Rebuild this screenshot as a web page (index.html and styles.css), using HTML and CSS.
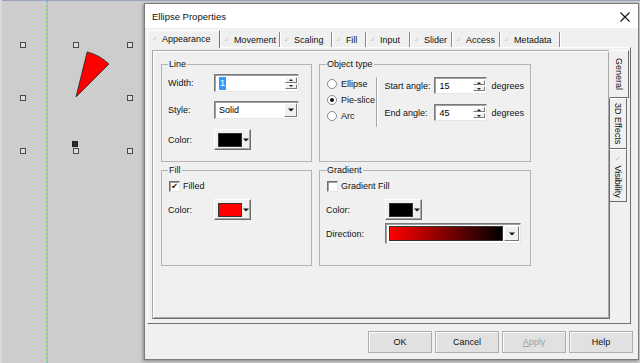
FILE: index.html
```html
<!DOCTYPE html>
<html lang="en">
<head>
  <meta charset="UTF-8" />
  <meta name="viewport" content="width=device-width, initial-scale=1.0" />
  <title>Ellipse Properties</title>
  <link rel="stylesheet" href="styles.css">
</head>
<body>
  <div class="desktop">
    <div class="topline"></div>
    <div class="guide"></div>

    <!-- selected pie-slice on the drawing canvas -->
    <svg class="shape" width="140" height="170" viewBox="0 0 140 170">
      <path d="M76 97 L87.2 51.9 A46.5 46.5 0 0 1 108.9 64.1 Z" fill="#ff0000" stroke="#222" stroke-width="0.8" />
    </svg>
    <div class="handle" style="left:20px;top:42px"></div>
    <div class="handle" style="left:73px;top:42px"></div>
    <div class="handle" style="left:127px;top:42px"></div>
    <div class="handle" style="left:20px;top:95px"></div>
    <div class="handle" style="left:127px;top:95px"></div>
    <div class="handle" style="left:20px;top:148px"></div>
    <div class="handle" style="left:73px;top:148px"></div>
    <div class="handle" style="left:127px;top:148px"></div>
    <div class="handle dark" style="left:72px;top:141px"></div>

    <div class="dialog">
      <div class="titlebar">
        <span class="title">Ellipse Properties</span>
        <svg class="close" width="10" height="10" viewBox="0 0 10 10">
          <path d="M0.5 0.5 L9.5 9.5 M9.5 0.5 L0.5 9.5" stroke="#111" stroke-width="1.1" />
        </svg>
      </div>

      <div class="client">
        <div class="tabs">
          <div class="tabstrip">
            <div class="tab active"><span class="tick">✓</span>Appearance</div>
            <div class="tab"><span class="tick">✓</span>Movement</div>
            <div class="tab"><span class="tick">✓</span>Scaling</div>
            <div class="tab"><span class="tick">✓</span>Fill</div>
            <div class="tab"><span class="tick">✓</span>Input</div>
            <div class="tab"><span class="tick">✓</span>Slider</div>
            <div class="tab"><span class="tick">✓</span>Access</div>
            <div class="tab"><span class="tick">✓</span>Metadata</div>
          </div>

          <div class="tabbody">
            <div class="page">
              <fieldset class="group">
                <legend>Line</legend>
                <div class="row first">
                  <span class="label">Width:</span>
                  <div class="spin wide">
                    <span class="value"><span class="sel">1</span></span>
                    <span class="arrows"><span class="up"></span><span class="down"></span></span>
                  </div>
                </div>
                <div class="row style-row">
                  <span class="label">Style:</span>
                  <div class="combo">
                    <span class="value">Solid</span>
                    <span class="drop"></span>
                  </div>
                </div>
                <div class="row color-row">
                  <span class="label">Color:</span>
                  <div class="colorbtn"><span class="swatch black"></span><span class="caret"></span></div>
                </div>
              </fieldset>

              <fieldset class="group">
                <legend>Object type</legend>
                <div class="objtype">
                  <div class="radios">
                    <label class="radio"><span class="dot"></span>Ellipse</label>
                    <label class="radio on"><span class="dot"></span>Pie-slice</label>
                    <label class="radio"><span class="dot"></span>Arc</label>
                  </div>
                  <div class="sep"></div>
                  <div class="angles">
                    <div class="row">
                      <span class="label angle">Start angle:</span>
                      <div class="spin narrow">
                        <span class="value">15</span>
                        <span class="arrows"><span class="up"></span><span class="down"></span></span>
                      </div>
                      <span class="unit">degrees</span>
                    </div>
                    <div class="row end-row">
                      <span class="label angle">End angle:</span>
                      <div class="spin narrow">
                        <span class="value">45</span>
                        <span class="arrows"><span class="up"></span><span class="down"></span></span>
                      </div>
                      <span class="unit">degrees</span>
                    </div>
                  </div>
                </div>
              </fieldset>

              <fieldset class="group">
                <legend>Fill</legend>
                <label class="check on"><span class="box">✔</span>Filled</label>
                <div class="row color-row2">
                  <span class="label">Color:</span>
                  <div class="colorbtn"><span class="swatch red"></span><span class="caret"></span></div>
                </div>
              </fieldset>

              <fieldset class="group">
                <legend>Gradient</legend>
                <label class="check"><span class="box"></span>Gradient Fill</label>
                <div class="row color-row2">
                  <span class="label long">Color:</span>
                  <div class="colorbtn"><span class="swatch black"></span><span class="caret"></span></div>
                </div>
                <div class="row dir-row">
                  <span class="label long">Direction:</span>
                  <div class="gradcombo">
                    <span class="gradbar"></span>
                    <span class="drop"></span>
                  </div>
                </div>
              </fieldset>
            </div>

            <div class="vtabs">
              <div class="vtab active"><span class="vlabel">General</span></div>
              <div class="vtab fx"><span class="vlabel">3D Effects</span></div>
              <div class="vtab vis"><span class="vlabel"><span class="tick">✓</span> Visibility</span></div>
            </div>
          </div>
        </div>

        <div class="buttons">
          <button class="btn">OK</button>
          <button class="btn">Cancel</button>
          <button class="btn" disabled><u>A</u>pply</button>
          <button class="btn">Help</button>
        </div>
      </div>
    </div>
  </div>
</body>
</html>
```

FILE: styles.css
```css
* { box-sizing: border-box; }
body {
  margin: 0;
  background: #cccccc;
  font-family: "Liberation Sans", Arial, sans-serif;
  font-size: 9px;
  color: #000;
}

.desktop {
  position: relative;
  width: 640px;
  height: 363px;
  overflow: hidden;
  background: #cdcdcd;
  border-left: 2px solid #dadada;
}

.topline {
  height: 1px;
  background: #9aa4bd;
}

.guide {
  position: absolute;
  left: 44px;
  top: 1px;
  bottom: 0;
  width: 2px;
  background: repeating-linear-gradient(to bottom, #74c6dc 0 2px, #d6c66c 2px 4px);
}

.shape {
  position: absolute;
  left: -2px;
  top: 0;
}

.handle {
  position: absolute;
  width: 6px;
  height: 6px;
  margin-left: -2px;
  border: 1px solid #4a4a4a;
  background: #dedede;
}

.handle.dark {
  background: #2a2a2a;
  border-color: #222;
}

/* dialog window */
.dialog {
  position: absolute;
  left: 142px;
  top: 3px;
  width: 495px;
  height: 357px;
  background: #f0f0f0;
  border: 1px solid #7c7c7c;
  box-shadow: -1px 1px 3px rgba(0,0,0,0.35);
  display: flex;
  flex-direction: column;
}

.titlebar {
  height: 24px;
  background: #fff;
  display: flex;
  align-items: center;
  justify-content: space-between;
  padding: 0 8px 0 7px;
}

.title {
  font-size: 9.5px;
  color: #111;
}

.close { margin-top: 1px; }

.client {
  flex: 1;
  padding: 2px 5px 0 2px;
  display: flex;
  flex-direction: column;
}

.tabs {
  width: 484px;
  height: 294px;
  display: flex;
  flex-direction: column;
}

.tabstrip {
  height: 17px;
  display: flex;
  align-items: flex-end;
}

.tab {
  height: 15px;
  display: flex;
  align-items: center;
  padding: 0 3px 0 4px;
  border-right: 1px solid #8a8a8a;
  box-shadow: 1px 0 0 #fff;
  color: #111;
  white-space: nowrap;
}

.tab:nth-child(2) { width: 60px; }
.tab:nth-child(3) { width: 52px; }
.tab:nth-child(4) { width: 34px; }
.tab:nth-child(5) { width: 44px; }
.tab:nth-child(6) { width: 42px; }
.tab:nth-child(7) { width: 48px; }
.tab:nth-child(8) { width: 60px; }

.tab.active {
  width: 73px;
  height: 18px;
  margin-bottom: -1px;
  padding-bottom: 2px;
  border-left: 1px solid #fff;
  border-top: 1px solid #fff;
  border-right: 1px solid #6e6e6e;
  background: #f0f0f0;
  position: relative;
  z-index: 1;
}

.tick {
  color: #c4c4c4;
  font-family: "DejaVu Sans", sans-serif;
  font-size: 7px;
  margin-right: 4px;
}

.tabbody {
  flex: 1;
  display: flex;
  padding: 2px 1px 4px 4px;
  border: 1px solid;
  border-color: #fff #6e6e6e #6e6e6e #fff;
}

.page {
  width: 458px;
  height: 269px;
  border: 1px solid;
  border-color: #a8a8a8 #6e6e6e #6e6e6e #a8a8a8;
  box-shadow: inset 1px 1px 0 #fff, inset -1px -1px 0 #a8a8a8;
  padding: 7px 0 0 8px;
  display: grid;
  grid-template-columns: 151px 212px;
  grid-template-rows: 104px 102px;
  column-gap: 7px;
  row-gap: 2px;
}

/* group boxes */
.group {
  margin: 0;
  min-width: 0;
  padding: 4px 6px 0 6px;
  border: 1px solid #b4b4b4;
}

.group legend {
  padding: 0 1px;
  line-height: 12px;
  color: #111;
}

.row {
  display: flex;
  align-items: center;
}

.row.first { height: 18px; }
.row.style-row { height: 18px; margin-top: 9px; }
.row.color-row { height: 21px; margin-top: 10px; }
.row.color-row2 { height: 21px; margin-top: 7px; }
.row.dir-row { height: 21px; margin-top: 3px; }

.label {
  width: 46px;
  color: #111;
}

.label.long { width: 59px; }
.label.angle { width: 50px; }

.spin, .combo {
  display: flex;
  height: 18px;
  background: #fff;
  border: 1px solid;
  border-color: #7a7a7a #e6e6e6 #e6e6e6 #7a7a7a;
  box-shadow: inset 1px 1px 0 #a0a0a0;
  padding: 1px 1px 1px 3px;
}

.spin.wide, .combo { width: 85px; }
.spin.narrow { width: 53px; height: 17px; }

.value {
  flex: 1;
  display: flex;
  align-items: center;
  padding-left: 1px;
}

.sel {
  background: #3399ff;
  color: #fff;
  padding: 1px 1px;
  line-height: 11px;
}

.arrows {
  width: 12px;
  display: flex;
  flex-direction: column;
  gap: 1px;
  padding: 1px 0;
}

.arrows span, .drop {
  position: relative;
  flex: 1;
  background: #f0f0f0;
  border: 1px solid;
  border-color: #fff #7a7a7a #7a7a7a #fff;
}

.arrows span::after, .drop::after, .caret::after {
  content: "";
  position: absolute;
  left: 50%;
  top: 50%;
  border-left: 2px solid transparent;
  border-right: 2px solid transparent;
  transform: translate(-50%, -50%);
}

.arrows .up::after { border-bottom: 2px solid #222; }
.arrows .down::after { border-top: 2px solid #222; }

.drop {
  flex: none;
  width: 13px;
}

.drop::after, .caret::after {
  border-left-width: 3px;
  border-right-width: 3px;
  border-top: 3px solid #111;
}

.colorbtn {
  width: 37px;
  height: 21px;
  display: flex;
  align-items: center;
  padding: 0 0 0 3px;
  background: #f0f0f0;
  border: 1px solid;
  border-color: #fff #6e6e6e #6e6e6e #fff;
  box-shadow: inset -1px -1px 0 #a8a8a8;
}

.swatch {
  width: 24px;
  height: 14px;
  border: 1px solid #333;
}

.swatch.black { background: #000; }
.swatch.red { background: #ff0000; }

.caret {
  position: relative;
  flex: 1;
  height: 100%;
}

/* object type */
.objtype {
  display: flex;
  align-items: flex-start;
}

.radios {
  width: 52px;
  margin-top: 2px;
  display: flex;
  flex-direction: column;
}

.radio {
  height: 16px;
  display: flex;
  align-items: center;
  gap: 4px;
  padding-left: 1px;
  color: #111;
}

.dot {
  width: 10px;
  height: 10px;
  border-radius: 50%;
  background: #fff;
  border: 1px solid #8c8c8c;
  display: flex;
  align-items: center;
  justify-content: center;
}

.radio.on .dot::after {
  content: "";
  width: 4px;
  height: 4px;
  border-radius: 50%;
  background: #111;
}

.sep {
  width: 2px;
  height: 50px;
  margin-top: 3px;
  border-left: 1px solid #a8a8a8;
  border-right: 1px solid #fff;
}

.angles {
  padding: 3px 0 0 6px;
}

.angles .row { height: 17px; }
.angles .end-row { margin-top: 10px; }

.unit {
  margin-left: 4px;
  color: #111;
}

/* checkboxes */
.check {
  height: 12px;
  display: flex;
  align-items: center;
  gap: 3px;
  padding-left: 1px;
  color: #111;
}

.check .box {
  width: 11px;
  height: 11px;
  background: #fff;
  border: 1px solid;
  border-color: #6e6e6e #e6e6e6 #e6e6e6 #6e6e6e;
  box-shadow: inset 1px 1px 0 #a0a0a0;
  font-family: "DejaVu Sans", sans-serif;
  font-size: 8px;
  line-height: 9px;
  text-align: center;
  color: #111;
}

.gradcombo {
  width: 136px;
  height: 21px;
  display: flex;
  gap: 1px;
  padding: 2px 1px 2px 3px;
  background: #fff;
  border: 1px solid;
  border-color: #7a7a7a #e6e6e6 #e6e6e6 #7a7a7a;
  box-shadow: inset 1px 1px 0 #a0a0a0;
}

.gradbar {
  width: 114px;
  border: 1px solid #333;
  background: linear-gradient(to right, #ff0000, #000);
}

.gradcombo .drop { width: 15px; }

/* vertical tabs */
.vtabs {
  width: 19px;
  display: flex;
  flex-direction: column;
  margin-left: -1px;
}

.vtab {
  display: flex;
  justify-content: center;
  align-items: center;
  border: 1px solid;
  border-color: #fff #6e6e6e #6e6e6e transparent;
  width: 18px;
  color: #111;
}

.vtab.active {
  height: 48px;
  width: 20px;
  background: #f0f0f0;
  border-top-color: #fff;
}

.vtab.fx { height: 51px; }
.vtab.vis { height: 53px; justify-content: flex-start; padding-top: 0; }

.vlabel {
  writing-mode: vertical-rl;
  white-space: nowrap;
}

.vtab.vis .vlabel { margin: 0 auto; padding-top: 2px; }
.vtab.vis .tick { margin: 0; }

/* dialog buttons */
.buttons {
  margin-top: 7px;
  display: flex;
  justify-content: flex-end;
  gap: 3px;
  padding-right: 0;
}

.btn {
  width: 64px;
  height: 22px;
  font-family: "Liberation Sans", Arial, sans-serif;
  font-size: 9px;
  color: #111;
  background: #e1e1e1;
  border: 1px solid #adadad;
  box-shadow: inset 1px 1px 0 #fdfdfd;
  padding: 0;
}

.btn:disabled {
  color: #a0a0a0;
}
```
